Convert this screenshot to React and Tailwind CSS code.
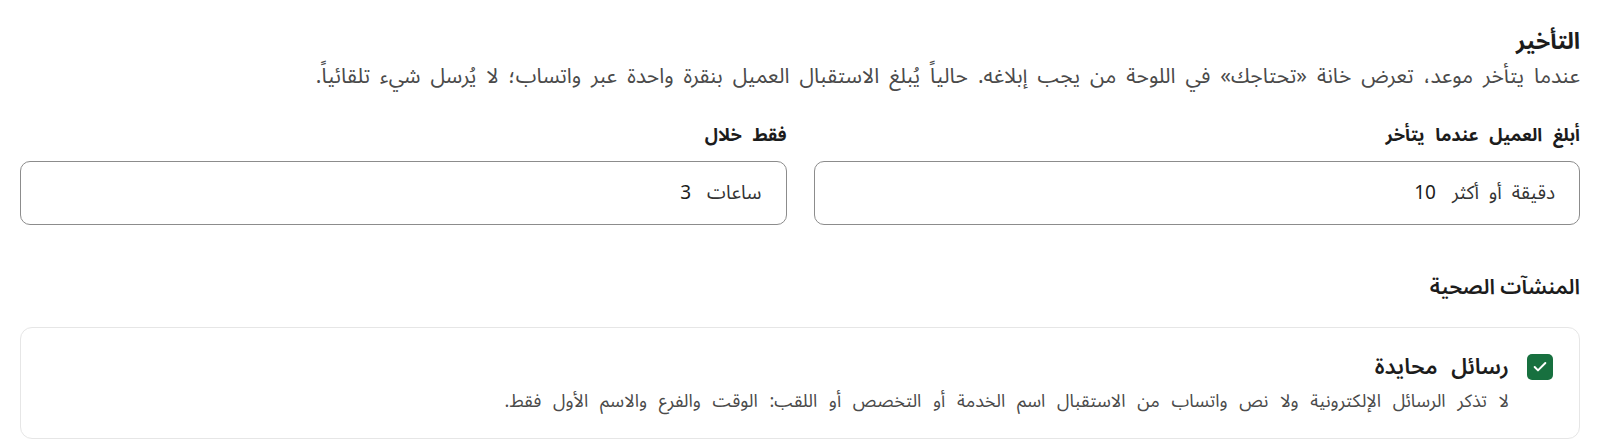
import { Check } from "lucide-react";

const font = { fontFamily: '"Noto Sans Arabic", "Noto Sans", "DejaVu Sans", sans-serif' };

const Field = ({ label, unit, value }) => (
  <div className="flex flex-col">
    <label className="text-[18px] leading-[26px] font-bold text-[#1c1c1c] mb-[13px] [word-spacing:6px]">
      {label}
    </label>
    <div className="h-[64px] rounded-[10px] border border-[#8c8c8c] flex items-center gap-4 px-6 text-[19px] text-[#333333]">
      <span className="[word-spacing:5px]">{unit}</span>
      <span className="text-[#1c1c1c]">{value}</span>
    </div>
  </div>
);

export default function App() {
  return (
    <div dir="rtl" style={font} className="bg-white min-h-screen px-5 pt-[26px]">
      {/* Delay section */}
      <h2 className="text-[23px] leading-[32px] font-bold text-[#1c1c1c]">التأخير</h2>
      <p className="mt-[4px] text-[21px] leading-[28px] text-[#4a4a4a] [word-spacing:4.5px]">
        عندما يتأخر موعد، تعرض خانة «تحتاجك» في اللوحة من يجب إبلاغه. حالياً يُبلغ الاستقبال العميل بنقرة واحدة عبر واتساب؛ لا يُرسل شيء تلقائياً.
      </p>

      <div className="grid grid-cols-2 gap-[27px] mt-[32px]">
        <Field label="أبلغ العميل عندما يتأخر" unit="دقيقة أو أكثر" value="10" />
        <Field label="فقط خلال" unit="ساعات" value="3" />
      </div>

      {/* Health facilities */}
      <h3 className="mt-[47px] text-[21px] leading-[30px] font-semibold text-[#1c1c1c]">
        المنشآت الصحية
      </h3>

      <div className="mt-[25px] rounded-xl border border-[#e6e6e6] pt-6 pb-[25px] pr-[26px] pl-6">
        <div className="flex items-center gap-[18px]">
          <span className="w-[26px] h-[26px] rounded-[5px] bg-[#17703f] flex items-center justify-center">
            <Check className="w-4 h-4 text-white" strokeWidth={3} />
          </span>
          <span className="text-[22px] leading-[30px] font-semibold text-[#1c1c1c] [word-spacing:8px]">رسائل محايدة</span>
        </div>
        <p className="mt-[7px] pr-[44px] text-[18px] leading-[24px] text-[#4a4a4a] [word-spacing:7px]">
          لا تذكر الرسائل الإلكترونية ولا نص واتساب من الاستقبال اسم الخدمة أو التخصص أو اللقب: الوقت والفرع والاسم الأول فقط.
        </p>
      </div>
    </div>
  );
}
